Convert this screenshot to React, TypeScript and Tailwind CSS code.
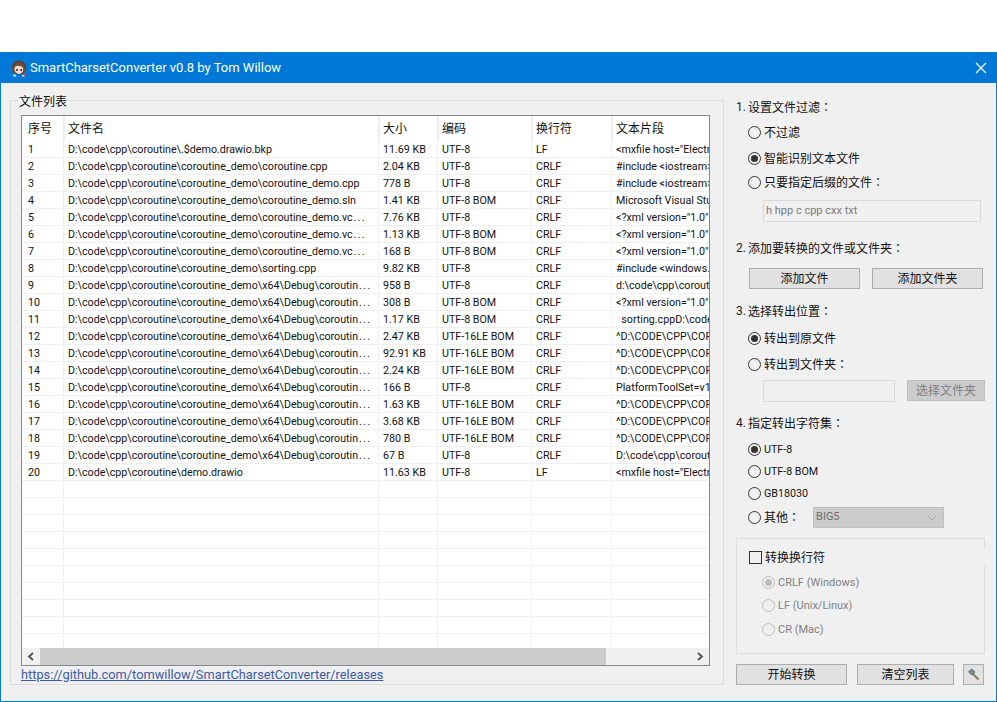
const FONT = "font-['Roboto','Noto_Sans_CJK_SC',sans-serif]";

const PFX = 'D:\\code\\cpp\\coroutine\\coroutine_demo\\';
const DBG = PFX + 'x64\\Debug\\coroutin...';
const XML = '<?xml version="1.0" encoding="utf-8"?>';
const INC = '#include <iostream>';
const CAP = '^D:\\CODE\\CPP\\COROUTINE\\COROUTINE_DEMO';
const MX = '<mxfile host="Electron" modified="2022"';

const rows: [string, string, string, string, string][] = [
  ['D:\\code\\cpp\\coroutine\\.$demo.drawio.bkp', '11.69 KB', 'UTF-8', 'LF', MX],
  [PFX + 'coroutine.cpp', '2.04 KB', 'UTF-8', 'CRLF', INC],
  [PFX + 'coroutine_demo.cpp', '778 B', 'UTF-8', 'CRLF', INC],
  [PFX + 'coroutine_demo.sln', '1.41 KB', 'UTF-8 BOM', 'CRLF', 'Microsoft Visual Studio Solution File'],
  [PFX + 'coroutine_demo.vc...', '7.76 KB', 'UTF-8', 'CRLF', XML],
  [PFX + 'coroutine_demo.vc...', '1.13 KB', 'UTF-8 BOM', 'CRLF', XML],
  [PFX + 'coroutine_demo.vc...', '168 B', 'UTF-8 BOM', 'CRLF', XML],
  [PFX + 'sorting.cpp', '9.82 KB', 'UTF-8', 'CRLF', '#include <windows.h>'],
  [DBG, '958 B', 'UTF-8', 'CRLF', 'd:\\code\\cpp\\coroutine\\coroutine_demo'],
  [DBG, '308 B', 'UTF-8 BOM', 'CRLF', XML],
  [DBG, '1.17 KB', 'UTF-8 BOM', 'CRLF', '\u00a0\u00a0sorting.cppD:\\code\\cpp\\coroutine'],
  [DBG, '2.47 KB', 'UTF-16LE BOM', 'CRLF', CAP],
  [DBG, '92.91 KB', 'UTF-16LE BOM', 'CRLF', CAP],
  [DBG, '2.24 KB', 'UTF-16LE BOM', 'CRLF', CAP],
  [DBG, '166 B', 'UTF-8', 'CRLF', 'PlatformToolSet=v143:VCToolArch'],
  [DBG, '1.63 KB', 'UTF-16LE BOM', 'CRLF', CAP],
  [DBG, '3.68 KB', 'UTF-16LE BOM', 'CRLF', CAP],
  [DBG, '780 B', 'UTF-16LE BOM', 'CRLF', CAP],
  [DBG, '67 B', 'UTF-8', 'CRLF', 'D:\\code\\cpp\\coroutine\\coroutine_demo'],
  ['D:\\code\\cpp\\coroutine\\demo.drawio', '11.63 KB', 'UTF-8', 'LF', MX],
];

const GRID = 'grid grid-cols-[41px_315px_59px_94px_80px_98px]';

function Cell({ children = '', first = false }: { children?: string; first?: boolean }) {
  // 省略号的点在参考图里间距更宽
  const cut = children.endsWith('...');
  return (
    <div className={`h-[17px] overflow-hidden whitespace-pre border-b border-[#f0f0f0] text-[10.7px] leading-[18px] text-[#111] ${first ? 'pl-[6px]' : 'border-l pl-[4px]'}`}>
      {cut ? children.slice(0, -3) : children}
      {cut && <span className="ml-[1px] tracking-[1.2px]">...</span>}
    </div>
  );
}

function Head({ children, first = false }: { children: string; first?: boolean }) {
  return (
    <div className={`flex h-[25px] items-center text-[12px] text-[#111] ${first ? 'pl-[6px]' : 'border-l-2 border-[#ececec] pl-[3px]'}`}>
      {children}
    </div>
  );
}

function FileTable() {
  const blanks = Array.from({ length: 10 }, (_, i) => i);
  return (
    <div className="mt-[6px] ml-[10px] flex h-[551px] w-[689px] flex-col border border-[#828790] bg-white">
      <div className={GRID}>
        <Head first>序号</Head>
        <Head>文件名</Head>
        <Head>大小</Head>
        <Head>编码</Head>
        <Head>换行符</Head>
        <Head>文本片段</Head>
      </div>
      <div className="min-h-0 flex-1 overflow-hidden">
        {rows.map((r, i) => (
          <div key={i} className={GRID}>
            <Cell first>{String(i + 1)}</Cell>
            <Cell>{r[0]}</Cell>
            <Cell>{r[1]}</Cell>
            <Cell>{r[2]}</Cell>
            <Cell>{r[3]}</Cell>
            <Cell>{r[4]}</Cell>
          </div>
        ))}
        {blanks.map(i => (
          <div key={i} className={GRID}>
            <Cell first />
            <Cell />
            <Cell />
            <Cell />
            <Cell />
            <Cell />
          </div>
        ))}
      </div>
      {/* 横向滚动条 */}
      <div className="flex h-[17px] shrink-0 items-stretch bg-[#f0f0f0]">
        <div className="flex w-[18px] items-center justify-center">
          <svg width="8" height="9" viewBox="0 0 8 9" fill="none" stroke="#505050" strokeWidth="1.8"><path d="M6 1 2 4.5 6 8" /></svg>
        </div>
        <div className="w-[566px] bg-[#cdcdcd]" />
        <div className="flex-1" />
        <div className="flex w-[18px] items-center justify-center">
          <svg width="8" height="9" viewBox="0 0 8 9" fill="none" stroke="#505050" strokeWidth="1.8"><path d="M2 1 6 4.5 2 8" /></svg>
        </div>
      </div>
    </div>
  );
}

// 全角冒号在 TC 字形里是居中的，和参考图一致
function Colon() {
  return <span className="font-['Noto_Sans_CJK_TC']">：</span>;
}

function Label({ n, text, className }: { n: string; text: string; className: string }) {
  return (
    <div className={`flex h-5 items-center text-[12px] text-[#111] ${className}`}>
      <span className="w-[12px] text-[#222]">{n}.</span>
      <span>{text}<Colon /></span>
    </div>
  );
}

function Radio({ text, colon = false, checked = false, className = '' }: { text: string; colon?: boolean; checked?: boolean; className?: string }) {
  return (
    <div className={`ml-[12px] flex h-5 items-center text-[12px] text-[#111] ${className}`}>
      <span className="flex h-[13px] w-[13px] shrink-0 items-center justify-center rounded-full border border-[#333]">
        {checked && <span className="h-[7px] w-[7px] rounded-full bg-[#333]" />}
      </span>
      {colon
        ? <span className="ml-[3px]">{text}<Colon /></span>
        : <span className="ml-[3px] pt-[2px]">{text}</span>}
    </div>
  );
}

function SubRadio({ text, checked = false, className = '' }: { text: string; checked?: boolean; className?: string }) {
  return (
    <div className={`ml-[25px] flex h-5 items-center text-[11px] text-[#7f7f7f] ${className}`}>
      <span className="flex h-[13px] w-[13px] shrink-0 items-center justify-center rounded-full border border-[#bcbcbc]">
        {checked && <span className="h-[7px] w-[7px] rounded-full bg-[#bcbcbc]" />}
      </span>
      <span className="ml-[3px] pt-[2px]">{text}</span>
    </div>
  );
}

function Btn({ text, w, className = '' }: { text: string; w: string; className?: string }) {
  return (
    <button className={`flex h-[21px] items-center justify-center border border-[#adadad] bg-[#e1e1e1] text-[12px] text-[#111] ${w} ${className}`}>
      {text}
    </button>
  );
}

function Avatar() {
  return (
    <svg width="16" height="17" viewBox="0 0 16 17" className="shrink-0">
      <circle cx="8" cy="7.5" r="7" fill="#5a3a2c" />
      <path d="M2 13 1 9l2-5 5-3 5 3 2 5-1 4z" fill="#6d4a38" />
      <path d="M3.5 8.5C4 6 6 5.5 8.5 6c2 .3 3.500 1 3.700 3 .2 2.500-1.600 5-4.200 5S3.200 11 3.500 8.500z" fill="#f1d9cd" />
      <circle cx="6" cy="10" r="1" fill="#3a2420" />
      <circle cx="10.200" cy="10" r="1" fill="#3a2420" />
      <path d="M2 14.500h2.500l1 2H2.500zM11 15h3v1.500h-3z" fill="#e6e2e4" />
      <rect x="13" y="14" width="2" height="2" fill="#d0453c" />
    </svg>
  );
}

function RightPane() {
  return (
    <div className="ml-[12px] flex w-[249px] shrink-0 flex-col">
      <Label n="1" text="设置文件过滤" className="mt-[14px]" />
      <Radio text="不过滤" className="mt-[5px]" />
      <Radio text="智能识别文本文件" checked className="mt-[6px]" />
      <Radio text="只要指定后缀的文件" colon className="mt-[4px]" />
      <div className="mt-[8px] ml-[27px] flex h-[22px] w-[218px] items-center border border-[#d9d9d9] bg-[#f0f0f0] px-[2px] text-[11px] text-[#7a7a7a]">
        h hpp c cpp cxx txt
      </div>

      <Label n="2" text="添加要转换的文件或文件夹" className="mt-[16px]" />
      <div className="mt-[10px] ml-[13px] flex gap-[12px]">
        <Btn text="添加文件" w="w-[111px]" />
        <Btn text="添加文件夹" w="w-[111px]" />
      </div>

      <Label n="3" text="选择转出位置" className="mt-[12px]" />
      <Radio text="转出到原文件" checked className="mt-[7px]" />
      <Radio text="转出到文件夹" colon className="mt-[6px]" />
      <div className="mt-[6px] ml-[27px] flex items-start gap-[12px]">
        <div className="h-[22px] w-[132px] border border-[#d9d9d9] bg-[#f0f0f0]" />
        <button className="flex h-[21px] w-[78px] items-center justify-center border border-[#bfbfbf] bg-[#cccccc] text-[12px] text-[#7f7f7f]">
          选择文件夹
        </button>
      </div>

      <Label n="4" text="指定转出字符集" className="mt-[11px]" />
      <Radio text="UTF-8" checked className="mt-[6px] !text-[10.7px]" />
      <Radio text="UTF-8 BOM" className="mt-[2px] !text-[10.7px]" />
      <Radio text="GB18030" className="mt-[2px] !text-[10.7px]" />
      <div className="mt-[4px] flex items-center">
        <Radio text="其他" colon />
        <div className="ml-[13px] flex h-[21px] w-[131px] items-center justify-between border border-[#bfbfbf] bg-[#cccccc] pl-[2px] pr-[6px] text-[11px] text-[#6d6d6d]">
          BIG5
          <svg width="10" height="6" viewBox="0 0 10 6" fill="none" stroke="#a8a8a8"><path d="m1 1 4 4 4-4" /></svg>
        </div>
      </div>

      {/* 换行符分组框 */}
      <div className="relative mt-[10px] h-[116px] border border-[#dcdcdc]">
        <div className="absolute top-[10px] right-[-1px] h-[16px] w-px bg-[#f0f0f0]" />
        <div className="ml-[12px] mt-[8px] flex h-5 items-center text-[12px] text-[#111]">
          <span className="h-[13px] w-[13px] shrink-0 border border-[#333] bg-[#f0f0f0]" />
          <span className="ml-[3px] pt-[2px]">转换换行符</span>
        </div>
        <SubRadio text="CRLF (Windows)" checked className="mt-[5px]" />
        <SubRadio text="LF (Unix/Linux)" className="mt-[3px]" />
        <SubRadio text="CR (Mac)" className="mt-[4px]" />
      </div>

      <div className="mt-[10px] flex">
        <Btn text="开始转换" w="w-[111px]" />
        <Btn text="清空列表" w="w-[97px]" className="ml-[10px]" />
        <button className="ml-[9px] flex h-[21px] w-[21px] items-center justify-center border border-[#adadad] bg-[#e1e1e1]">
          <svg width="13" height="13" viewBox="0 0 13 13">
            <path d="m5.500 5.500 6 6" stroke="#8a7a5a" strokeWidth="2" />
            <path d="m1.500 4 3-3 3.500 3-3 3z" fill="#7d8a96" stroke="#4a5560" strokeWidth=".7" />
          </svg>
        </button>
      </div>
    </div>
  );
}

export default function App() {
  return (
    <div className={`h-[702px] w-[997px] overflow-hidden bg-white pt-[52px] ${FONT}`}>
      <div className="flex h-[650px] flex-col border border-[#0078d7] bg-[#f0f0f0]">
        {/* 标题栏 */}
        <div className="flex h-[30px] shrink-0 items-center bg-[#0078d7] pl-[10px] pr-[9px] text-white">
          <Avatar />
          <span className="ml-[3px] text-[13px]">SmartCharsetConverter v0.8 by Tom Willow</span>
          <svg className="ml-auto" width="12" height="12" viewBox="0 0 12 12" stroke="#fff" strokeWidth="1.100"><path d="m1 1 10 10M11 1 1 11" /></svg>
        </div>

        <div className="flex min-h-0 flex-1 pl-[9px]">
          {/* 文件列表 */}
          <div className="relative mt-[17px] h-[585px] w-[714px] shrink-0 border border-[#dcdcdc]">
            <div className="absolute -top-[7px] left-[7px] bg-[#f0f0f0] px-px text-[12px] leading-[16px] text-[#111]">文件列表</div>
            <div className="pt-[8px]">
              <FileTable />
              <a className="ml-[10px] block text-[12.8px] leading-[18px] text-[#3c5aa8] underline">
                https://github.com/tomwillow/SmartCharsetConverter/releases
              </a>
            </div>
          </div>
          <RightPane />
        </div>
      </div>
    </div>
  );
}
